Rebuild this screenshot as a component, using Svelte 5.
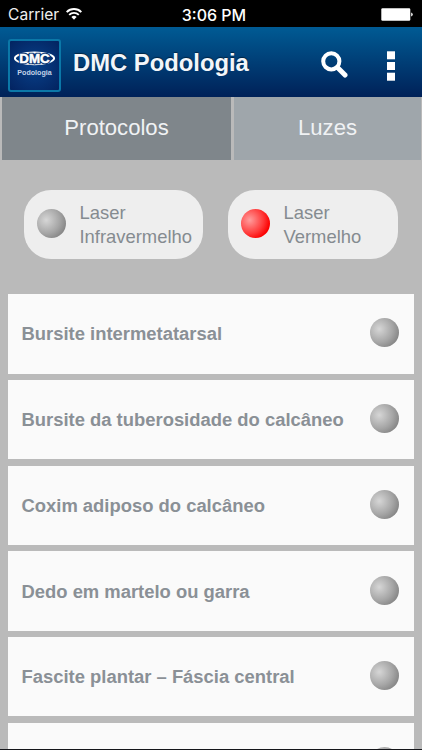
<script>
  let activeTab = $state('protocolos');
  let laser = $state('vermelho');

  const tabs = [
    { id: 'protocolos', label: 'Protocolos' },
    { id: 'luzes', label: 'Luzes' }
  ];

  const lasers = [
    { id: 'infravermelho', name: 'Infravermelho' },
    { id: 'vermelho', name: 'Vermelho' }
  ];

  const protocols = [
    'Bursite intermetatarsal',
    'Bursite da tuberosidade do calcâneo',
    'Coxim adiposo do calcâneo',
    'Dedo em martelo ou garra',
    'Fascite plantar – Fáscia central',
    ''
  ];
</script>

<div class="screen">
  <div class="status-bar">
    <div class="carrier">
      <span>Carrier</span>
      <svg class="wifi" viewBox="0 0 16 12" width="16" height="12">
        <path d="M0.7 4.1A10.3 10.3 0 0 1 15.3 4.1" fill="none" stroke="#fff" stroke-width="2" />
        <path d="M3.2 6.9A6.8 6.8 0 0 1 12.8 6.9" fill="none" stroke="#fff" stroke-width="1.9" />
        <path d="M5.4 9A3.8 3.8 0 0 1 10.6 9L8 11.7Z" fill="#fff" />
      </svg>
    </div>
    <div class="time">3:06 PM</div>
    <svg class="battery" viewBox="0 0 32 13" width="32" height="13">
      <rect x="0.3" y="0.3" width="29" height="12.4" rx="1.2" fill="#fff" />
      <path d="M30.2 4.5Q31.7 5 31.7 6.5T30.2 8.5Z" fill="#fff" />
    </svg>
  </div>

  <header>
    <div class="logo">
      <svg viewBox="0 0 50 50" width="50" height="50">
        <ellipse cx="25" cy="17.2" rx="20" ry="6" fill="none" stroke="#fff" stroke-width="2" />
        <text x="25" y="22.2" text-anchor="middle" textLength="31" lengthAdjust="spacingAndGlyphs" class="logo-mark-edge">DMC</text>
        <text x="25" y="22.2" text-anchor="middle" textLength="31" lengthAdjust="spacingAndGlyphs" class="logo-mark">DMC</text>
        <text x="25" y="34.5" text-anchor="middle" textLength="35" lengthAdjust="spacingAndGlyphs" class="logo-name">Podologia</text>
      </svg>
    </div>
    <h1>DMC Podologia</h1>
    <button class="icon-btn search" aria-label="Buscar">
      <svg viewBox="0 0 27 27" width="27" height="27">
        <circle cx="10.3" cy="10.3" r="8.1" fill="none" stroke="#fff" stroke-width="4" />
        <path d="M16.5 16.5L24 24" stroke="#fff" stroke-width="5" stroke-linecap="round" />
      </svg>
    </button>
    <button class="icon-btn menu" aria-label="Menu">
      <svg viewBox="0 0 8 30" width="8" height="30">
        <rect width="8" height="8" y="0.3" fill="#fff" />
        <rect width="8" height="8" y="11" fill="#fff" />
        <rect width="8" height="8" y="21.7" fill="#fff" />
      </svg>
    </button>
  </header>

  <nav>
    {#each tabs as tab}
      <button class="tab" class:active={activeTab === tab.id} onclick={() => (activeTab = tab.id)}>{tab.label}</button>
    {/each}
  </nav>

  <div class="lasers">
    {#each lasers as item}
      <button class="laser" onclick={() => (laser = item.id)}>
        <span class="ball" class:red={laser === item.id}></span>
        <span class="laser-label">Laser<br />{item.name}</span>
      </button>
    {/each}
  </div>

  <ul>
    {#each protocols as name}
      <li>
        <span>{name}</span>
        <span class="ball"></span>
      </li>
    {/each}
  </ul>
</div>

<style>
  :global(body) {
    margin: 0;
    background: #bababa;
  }
  .screen {
    width: 422px;
    height: 749px;
    overflow: hidden;
    background: #bababa;
    border-bottom: 1px solid #15161a;
    font-family: "Liberation Sans", Arial, sans-serif;
  }
  button {
    border: none;
    padding: 0;
    font-family: inherit;
    cursor: pointer;
  }
  svg {
    display: block;
  }
  .status-bar {
    display: grid;
    grid-template-columns: 1fr auto 1fr;
    align-items: center;
    height: 27px;
    padding: 2px 8px 0;
    box-sizing: border-box;
    background: #000;
    color: #fff;
    font-family: Inter, Roboto, sans-serif;
    font-size: 16px;
  }
  .carrier {
    display: flex;
    align-items: center;
    gap: 7px;
    color: #eee;
    font-size: 15.6px;
  }
  .wifi {
    margin-top: -1px;
  }
  .time {
    font-weight: 500;
    padding-left: 6px;
  }
  .battery {
    justify-self: end;
    margin-right: 1px;
  }
  header {
    display: flex;
    height: 70px;
    padding: 12px 27px 0 8px;
    box-sizing: border-box;
    background: linear-gradient(#005b94, #002158);
  }
  .logo {
    display: flex;
    align-items: center;
    justify-content: center;
    width: 53px;
    height: 53px;
    box-sizing: border-box;
    border: 2px solid #0b78a8;
    border-radius: 3px;
    background: radial-gradient(#08418a, #032360);
  }
  .logo-mark,
  .logo-mark-edge {
    font-size: 13.5px;
    font-weight: bold;
    fill: #fff;
    stroke: #fff;
    stroke-width: 0.5px;
  }
  .logo-mark-edge {
    fill: #06306f;
    stroke: #06306f;
    stroke-width: 2.6px;
  }
  .logo-name {
    font-size: 7.4px;
    font-weight: bold;
    fill: #c4d3e8;
  }
  h1 {
    margin: 8.5px auto 0 12px;
    font-size: 23.8px;
    line-height: 30px;
    color: #f3f6fa;
    text-shadow: 0 -1px 1px rgba(0, 0, 0, 0.45);
  }
  .icon-btn {
    align-self: flex-start;
    background: none;
  }
  .search {
    margin-top: 12px;
  }
  .menu {
    margin: 12px 0 0 39px;
  }
  nav {
    display: grid;
    grid-template-columns: 229px 187px;
    gap: 3px;
    padding: 0 2px;
  }
  .tab {
    height: 63px;
    padding-bottom: 1px;
    background: #9fa6ab;
    color: #f0f2f4;
    font-size: 22.1px;
  }
  .tab.active {
    background: #7f868b;
  }
  .lasers {
    display: grid;
    grid-template-columns: 179px 170px;
    gap: 25px;
    padding: 30.4px 24px 35px;
  }
  .laser {
    display: flex;
    align-items: center;
    gap: 14px;
    height: 69px;
    padding-left: 12.5px;
    border-radius: 27px;
    background: #eee;
  }
  .laser-label {
    color: #858b90;
    font-size: 18.4px;
    line-height: 24px;
    text-align: left;
  }
  .ball {
    flex: none;
    width: 29px;
    height: 29px;
    border-radius: 50%;
    background: radial-gradient(circle at 32% 38%, #d6d6d6, #a6a6a6 50%, #6b6b6b);
  }
  .laser .ball {
    margin-top: -2px;
  }
  .ball.red {
    background: radial-gradient(circle at 30% 38%, #ff9d9d, #ff3a3a 50%, #fb0000 75%);
  }
  ul {
    display: grid;
    gap: 6.5px;
    margin: 0;
    padding: 0 8px;
    list-style: none;
  }
  li {
    display: flex;
    align-items: center;
    justify-content: space-between;
    height: 79.2px;
    padding: 1px 15px 0 13.5px;
    box-sizing: border-box;
    background: #fafafa;
    color: #8a9096;
    font-size: 18.42px;
    font-weight: bold;
  }
  li .ball {
    margin-top: -3px;
  }
</style>
